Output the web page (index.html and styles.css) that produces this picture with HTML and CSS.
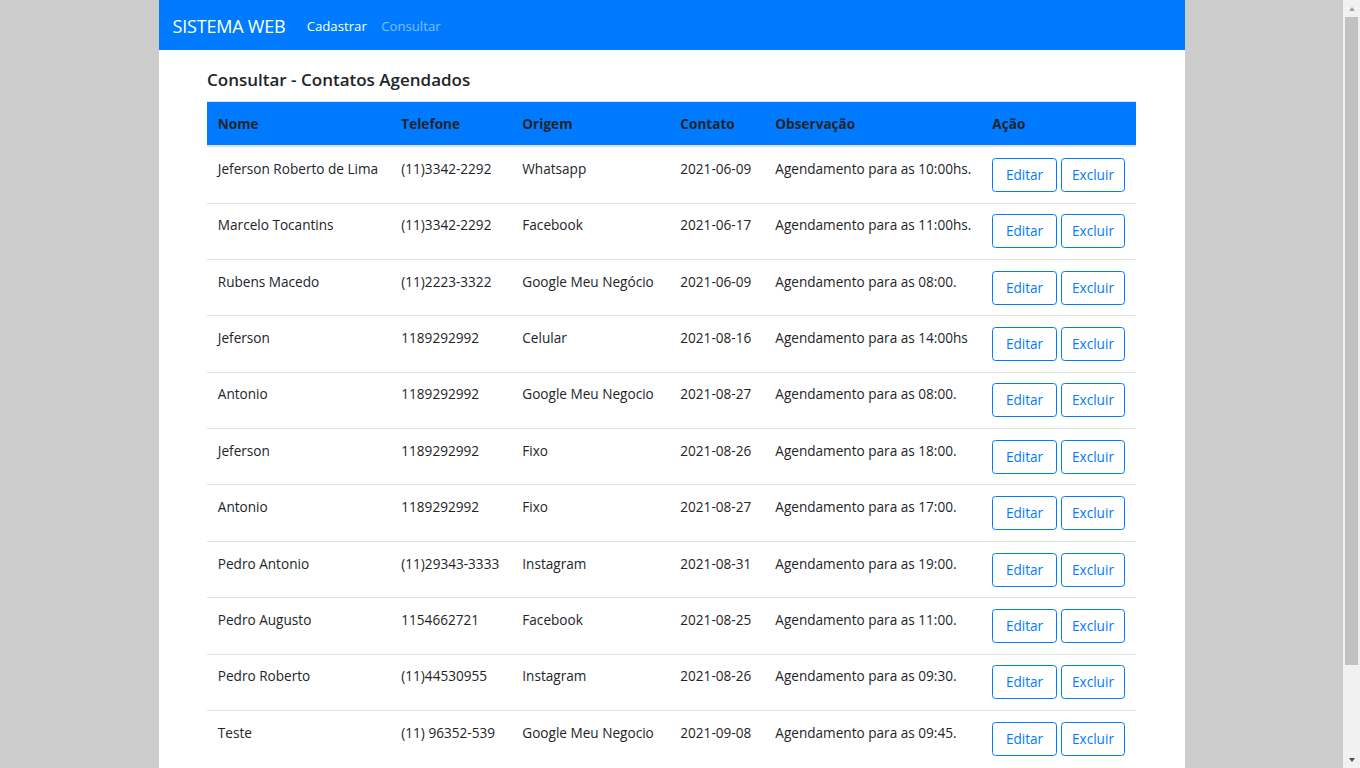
FILE: index.html
```html
<!DOCTYPE html>
<html lang="pt-br">
<head>
<meta charset="utf-8">
<title>Consultar - Contatos Agendados</title>
<link rel="stylesheet" href="styles.css">
</head>
<body>
<div class="viewport">
  <div class="page">
    <nav class="navbar">
      <a class="brand" href="#">SISTEMA WEB</a>
      <ul class="nav">
        <li><a class="nav-link active" href="#">Cadastrar</a></li>
        <li><a class="nav-link" href="#">Consultar</a></li>
      </ul>
    </nav>
    <main class="content">
      <h5 class="title">Consultar - Contatos Agendados</h5>
      <table class="table">
        <colgroup>
          <col class="c-nome"><col class="c-tel"><col class="c-orig"><col class="c-cont"><col class="c-obs"><col class="c-acao">
        </colgroup>
        <thead>
          <tr><th>Nome</th><th>Telefone</th><th>Origem</th><th>Contato</th><th>Observação</th><th>Ação</th></tr>
        </thead>
        <tbody>
          <tr><td>Jeferson Roberto de Lima</td><td>(11)3342-2292</td><td>Whatsapp</td><td>2021-06-09</td><td>Agendamento para as 10:00hs.</td><td><div class="actions"><a class="btn" href="#">Editar</a><a class="btn" href="#">Excluir</a></div></td></tr>
          <tr><td>Marcelo Tocantins</td><td>(11)3342-2292</td><td>Facebook</td><td>2021-06-17</td><td>Agendamento para as 11:00hs.</td><td><div class="actions"><a class="btn" href="#">Editar</a><a class="btn" href="#">Excluir</a></div></td></tr>
          <tr><td>Rubens Macedo</td><td>(11)2223-3322</td><td>Google Meu Negócio</td><td>2021-06-09</td><td>Agendamento para as 08:00.</td><td><div class="actions"><a class="btn" href="#">Editar</a><a class="btn" href="#">Excluir</a></div></td></tr>
          <tr><td>Jeferson</td><td>1189292992</td><td>Celular</td><td>2021-08-16</td><td>Agendamento para as 14:00hs</td><td><div class="actions"><a class="btn" href="#">Editar</a><a class="btn" href="#">Excluir</a></div></td></tr>
          <tr><td>Antonio</td><td>1189292992</td><td>Google Meu Negocio</td><td>2021-08-27</td><td>Agendamento para as 08:00.</td><td><div class="actions"><a class="btn" href="#">Editar</a><a class="btn" href="#">Excluir</a></div></td></tr>
          <tr><td>Jeferson</td><td>1189292992</td><td>Fixo</td><td>2021-08-26</td><td>Agendamento para as 18:00.</td><td><div class="actions"><a class="btn" href="#">Editar</a><a class="btn" href="#">Excluir</a></div></td></tr>
          <tr><td>Antonio</td><td>1189292992</td><td>Fixo</td><td>2021-08-27</td><td>Agendamento para as 17:00.</td><td><div class="actions"><a class="btn" href="#">Editar</a><a class="btn" href="#">Excluir</a></div></td></tr>
          <tr><td>Pedro Antonio</td><td>(11)29343-3333</td><td>Instagram</td><td>2021-08-31</td><td>Agendamento para as 19:00.</td><td><div class="actions"><a class="btn" href="#">Editar</a><a class="btn" href="#">Excluir</a></div></td></tr>
          <tr><td>Pedro Augusto</td><td>1154662721</td><td>Facebook</td><td>2021-08-25</td><td>Agendamento para as 11:00.</td><td><div class="actions"><a class="btn" href="#">Editar</a><a class="btn" href="#">Excluir</a></div></td></tr>
          <tr><td>Pedro Roberto</td><td>(11)44530955</td><td>Instagram</td><td>2021-08-26</td><td>Agendamento para as 09:30.</td><td><div class="actions"><a class="btn" href="#">Editar</a><a class="btn" href="#">Excluir</a></div></td></tr>
          <tr><td>Teste</td><td>(11) 96352-539</td><td>Google Meu Negocio</td><td>2021-09-08</td><td>Agendamento para as 09:45.</td><td><div class="actions"><a class="btn" href="#">Editar</a><a class="btn" href="#">Excluir</a></div></td></tr>
        </tbody>
      </table>
    </main>
  </div>
</div>
<div class="scrollbar" aria-hidden="true">
  <div class="sb-button"><span class="arrow-up"></span></div>
  <div class="sb-track"><div class="sb-thumb"></div></div>
  <div class="sb-button"><span class="arrow-down"></span></div>
</div>
</body>
</html>
```

FILE: styles.css
```css
html, body {
  margin: 0;
  padding: 0;
}
body {
  display: flex;
  height: 100vh;
  overflow: hidden;
  background: #cccccc;
  font-family: "Open Sans", "Noto Sans", Arial, sans-serif;
  font-size: 13.6px;
  line-height: 21.6px;
  color: #212529;
}
.viewport {
  flex: 1;
  min-width: 0;
  overflow: hidden;
}
.scrollbar {
  width: 17px;
  flex: none;
  display: flex;
  flex-direction: column;
  background: #f1f1f1;
}
.sb-button {
  height: 17px;
  flex: none;
  display: flex;
  align-items: center;
  justify-content: center;
}
.arrow-up {
  width: 0;
  height: 0;
  border-left: 3.5px solid transparent;
  border-right: 3.5px solid transparent;
  border-bottom: 4px solid #a3a3a3;
}
.arrow-down {
  width: 0;
  height: 0;
  border-left: 3.5px solid transparent;
  border-right: 3.5px solid transparent;
  border-top: 4px solid #505050;
}
.sb-track {
  flex: 1;
  padding: 0 2px;
}
.sb-thumb {
  height: 648px;
  background: #c1c1c1;
}
.page {
  width: 1026px;
  margin: 0 auto;
  background: #ffffff;
  min-height: 100vh;
}
.navbar {
  display: flex;
  align-items: center;
  background: #007bff;
  height: 50px;
  box-sizing: border-box;
  padding: 3px 14px 0;
}
.brand {
  font-size: 18px;
  color: #ffffff;
  text-decoration: none;
  margin-right: 14px;
  letter-spacing: -0.2px;
}
.nav {
  display: flex;
  list-style: none;
  margin: 0;
  padding: 0;
}
.nav-link {
  display: block;
  padding: 0 7.2px;
  color: rgba(255, 255, 255, 0.5);
  text-decoration: none;
  font-size: 13.2px;
}
.nav-link.active {
  color: #ffffff;
}
.content {
  padding: 19px 48.5px 48px 48.5px;
}
.title {
  margin: 0 0 10px;
  font-size: 17px;
  line-height: 22px;
  font-weight: 600;
  color: #212529;
}
.table {
  width: 929px;
  border-collapse: collapse;
  table-layout: fixed;
}
.c-nome { width: 183.5px; }
.c-tel { width: 121px; }
.c-orig { width: 158px; }
.c-cont { width: 95px; }
.c-obs { width: 217px; }
.c-acao { width: 154.5px; }
.table th {
  background: #007bff;
  color: #212529;
  font-weight: 700;
  text-align: left;
  padding: 10.8px;
  border-top: 1px solid #dee2e6;
  border-bottom: 2px solid #dee2e6;
  white-space: nowrap;
}
.table td {
  padding: 10.7px 10.8px;
  border-top: 1px solid #dee2e6;
  vertical-align: top;
  white-space: nowrap;
}
.actions {
  display: flex;
  gap: 4px;
}
.btn {
  display: inline-block;
  box-sizing: border-box;
  height: 34px;
  width: 65px;
  line-height: 32px;
  text-align: center;
  color: #007bff;
  border: 1px solid #007bff;
  border-radius: 3.6px;
  text-decoration: none;
  background: #ffffff;
}
```
